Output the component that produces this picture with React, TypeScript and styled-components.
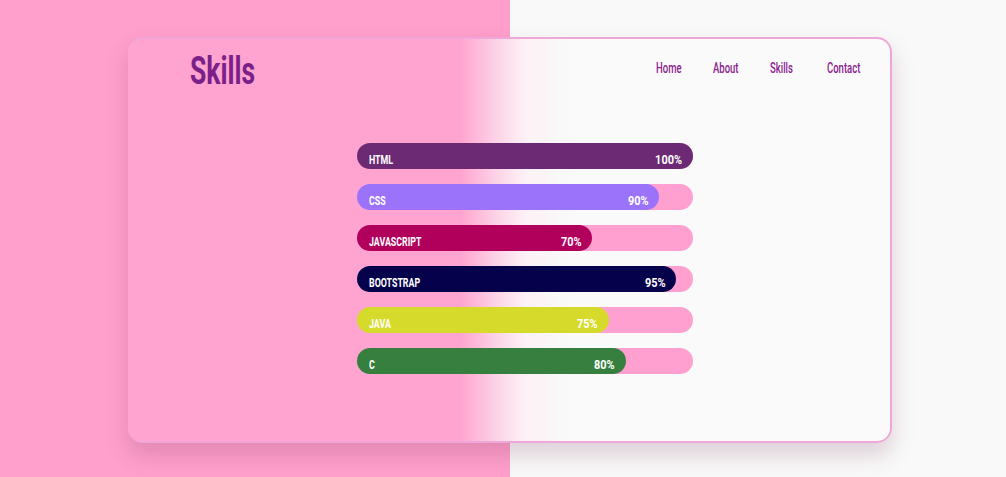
import styled, { createGlobalStyle } from "styled-components";

const GlobalStyle = createGlobalStyle`
  html, body {
    margin: 0;
    padding: 0;
  }
  body {
    font-family: Roboto, "Liberation Sans", sans-serif;
  }
`;

const skills = [
  { name: "HTML", percent: 100, color: "#6b2a73" },
  { name: "CSS", percent: 90, color: "#9b73fb" },
  { name: "JAVASCRIPT", percent: 70, color: "#b1005c" },
  { name: "BOOTSTRAP", percent: 95, color: "#05024b" },
  { name: "JAVA", percent: 75, color: "#d5da2b" },
  { name: "C", percent: 80, color: "#377f3f" },
];

const navLinks = ["Home", "About", "Skills", "Contact"];

export default function App() {
  return (
    <>
      <GlobalStyle />
      <Page>
        <Card>
          <Header>
            <Title>
              <Narrow $origin="left">Skills</Narrow>
            </Title>
            <Nav>
              {navLinks.map((link) => (
                <NavLink key={link} href="#">
                  <Narrow $origin="left">{link}</Narrow>
                </NavLink>
              ))}
            </Nav>
          </Header>
          <BarList>
            {skills.map((skill) => (
              <Track key={skill.name}>
                <Fill $color={skill.color} style={{ width: `${skill.percent}%` }}>
                  <Narrow $origin="left">{skill.name}</Narrow>
                  <Narrow $origin="right" $scale={0.84}>
                    {skill.percent}%
                  </Narrow>
                </Fill>
              </Track>
            ))}
          </BarList>
        </Card>
      </Page>
    </>
  );
}

// condensed look: no narrow family is installed, so squeeze the text
const Narrow = styled.span<{ $origin: "left" | "right"; $scale?: number }>`
  display: inline-block;
  transform: scaleX(${(p) => p.$scale ?? 0.68});
  transform-origin: ${(p) => p.$origin} center;
  white-space: nowrap;
`;

const Page = styled.div`
  width: 1006px;
  height: 477px;
  box-sizing: border-box;
  padding: 37px 0 0 128px;
  background: linear-gradient(to right, #ff9fcb 0, #ff9fcb 510px, #f9f9f9 510px);
  overflow: hidden;
`;

const Card = styled.div`
  width: 764px;
  height: 406px;
  box-sizing: border-box;
  border: 2px solid #efa6d9;
  border-left-color: #ffa4d0;
  border-radius: 15px;
  background: linear-gradient(
    to right,
    #ffa4d0 0%,
    #ffa4d0 43.5%,
    #fcd6e8 48.5%,
    #fcf1f6 52%,
    #fafafa 58%,
    #fafafa 100%
  );
  box-shadow: 0 12px 22px rgba(120, 60, 90, 0.22);
  display: flex;
  flex-direction: column;
`;

const Header = styled.div`
  display: flex;
  justify-content: space-between;
  align-items: flex-start;
  padding: 8px 6px 0 60px;
`;

const Title = styled.h1`
  margin: 0;
  font-size: 39px;
  font-weight: bold;
  color: #7b2089;
  line-height: 48px;
`;

const Nav = styled.nav`
  display: grid;
  grid-template-columns: repeat(4, 57px);
  padding-top: 13px;
`;

const NavLink = styled.a`
  font-size: 14px;
  font-weight: 500;
  color: #8a228f;
  text-decoration: none;
  line-height: 16px;
`;

const BarList = styled.div`
  display: flex;
  flex-direction: column;
  gap: 15px;
  width: 336px;
  margin: 48px 0 0 227px;
`;

const Track = styled.div`
  height: 26px;
  border-radius: 13px;
  background: #ffa0d0;
`;

const Fill = styled.div<{ $color: string }>`
  height: 100%;
  box-sizing: border-box;
  border-radius: 13px;
  background: ${(p) => p.$color};
  display: flex;
  justify-content: space-between;
  align-items: center;
  padding: 6px 11px 0 12px;
  color: #ffffff;
  font-size: 13px;
  font-weight: bold;
`;
